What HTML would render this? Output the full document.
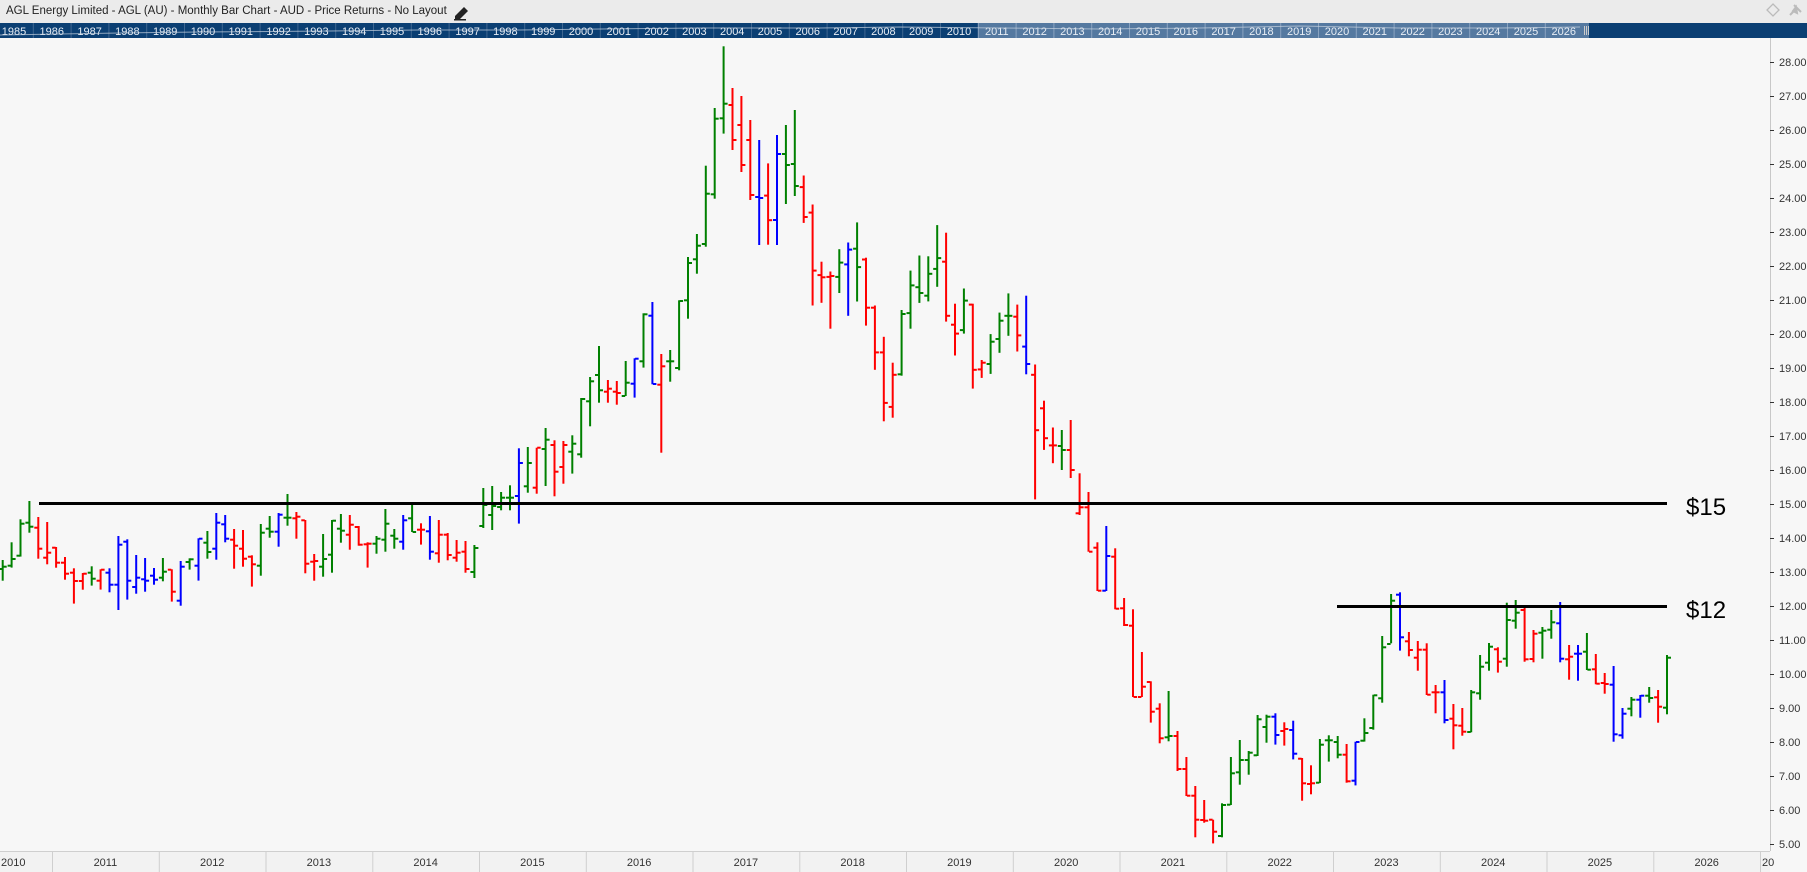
<!DOCTYPE html>
<html><head><meta charset="utf-8"><style>
*{margin:0;padding:0;box-sizing:border-box}
body{width:1807px;height:872px;overflow:hidden;background:#f7f7f7;font-family:"Liberation Sans",sans-serif;position:relative}
#title{position:absolute;left:0;top:0;width:1807px;height:23px;background:#ebebeb;color:#222;font-size:11.5px;line-height:23px;padding-left:6px}
svg{position:absolute;left:0;top:0}
</style></head><body>
<div id="title">AGL Energy Limited - AGL (AU) - Monthly Bar Chart - AUD - Price Returns - No Layout</div>
<svg id="s" width="1807" height="872" viewBox="0 0 1807 872"></svg>
<script>
var o=[];
function r(x,y,w,h,c){o.push('<rect x="'+x.toFixed(1)+'" y="'+y.toFixed(1)+'" width="'+w+'" height="'+h.toFixed(1)+'" fill="'+c+'"/>');}
function t(x,y,s,size,c,a){o.push('<text x="'+x+'" y="'+y+'" font-size="'+size+'" fill="'+c+'"'+(a?' text-anchor="'+a+'"':'')+' font-family="Liberation Sans, sans-serif">'+s+'</text>');}
o.push('<path d="M464 7 L468 11 L459 20 L455 20 L455 16 Z" fill="#222"/><rect x="454" y="19" width="12" height="1.5" fill="#222"/>');
o.push('<path d="M1773 4 L1779 10 L1773 16 L1767 10 Z" fill="none" stroke="#bbb" stroke-width="1.3"/>');
o.push('<path d="M1790 15 L1795 10 M1794 5 L1801 12 M1796 7 L1793 11 L1797 13 Z" stroke="#bbb" stroke-width="2" fill="#bbb"/>');
r(0,23,1807,15,'#0b3f73');
r(978,23,611,15,'#5579a0');
for(var k=0;k<42;k++){var nx=-5+37.8*k;r(nx,23,1,15,k>=26&&k<=41?'#8aa3c0':'#3f6791');t((nx+19).toFixed(1),35,1985+k,11,'#e8eef5','middle');}
o.push('<polyline points="0,35 60,34 120,33 200,32 330,31 420,30 520,30 600,29 700,28 820,28 900,27 1000,28 1100,29 1200,28 1300,26 1400,28 1500,28 1580,27" fill="none" stroke="#c8d3e0" stroke-width="1" opacity="0.7"/>');
r(1584,26,1,9,'#ccc');r(1586,26,1,9,'#ccc');r(1588,26,1,9,'#ccc');
r(1770,38,1,813,'#c8c8c8');
for(var p=5;p<=28;p++){var y=504+(15-p)*34;r(1770,y,4,1,'#333');t(1779,y+4,p.toFixed(2),11,'#333');}
r(0,851,1770,21,'#f2f2f2');r(0,851,1770,1,'#cfcfcf');
t(1,866,'2010',11,'#333');
for(var k=0;k<17;k++){var dx=52+106.75*k;r(dx,852,1,20,'#cfcfcf');if(dx+53<1770)t((dx+53.4).toFixed(1),866,2011+k,11,'#333','middle');else t((dx+2).toFixed(1),866,'20',11,'#333');}
var C={G:'#008000',R:'#ff0000',B:'#0000ff'};
function bar(i,hi,lo,op,cl,col){var x=2.7+8.9*(i-1);var c=C[col];r(x-1,hi,2,Math.max(lo-hi,2),c);r(x-4,op-1,3.5,2,c);r(x+0.5,cl-1,3.5,2,c);}
function set(list,fx,fy){list.forEach(function(b){bar(b[0],fy(b[1]),fy(b[2]),fy(b[3]),fy(b[4]),b[5]);});}
var id=function(v){return v;};
var z6=[[1,540,602,567,560,'G'],[2,487,563,557,537,'G'],[3,418,530,527,431,'G'],[4,363,458,428,440,'G'],[5,411,536,443,506,'R'],[6,426,553,533,518,'R'],[7,501,563,503,548,'R'],[8,531,599,548,581,'R'],[9,565,671,578,603,'R'],[10,579,629,603,581,'R'],[11,559,617,578,596,'G'],[12,568,629,602,569,'R'],[13,565,637,578,614,'B'],[14,468,690,614,494,'B'],[15,478,659,485,602,'B'],[16,525,641,621,593,'B'],[17,534,635,598,602,'B'],[18,564,614,587,599,'B'],[19,534,604,593,575,'G'],[20,568,665,569,635,'R'],[21,543,677,662,560,'B'],[22,535,569,546,538,'G'],[23,475,602,557,476,'B'],[24,453,536,488,516,'G'],[25,399,539,506,428,'B'],[26,405,487,433,476,'B'],[27,447,566,479,497,'R'],[28,450,560,506,536,'R'],[29,526,620,530,553,'R'],[30,432,587,557,458,'G'],[31,408,473,446,455,'G'],[32,399,500,455,404,'B'],[33,342,437,413,413,'G'],[34,396,476,415,410,'R'],[35,420,580,421,551,'R'],[36,522,602,545,543,'R'],[37,462,590,560,537,'G'],[38,420,578,524,422,'G'],[39,402,488,446,452,'G'],[40,405,509,464,434,'R'],[41,438,497,441,494,'R'],[42,487,563,493,491,'R'],[43,468,521,491,476,'G'],[44,387,515,479,431,'G'],[45,447,506,467,476,'G'],[46,405,509,485,421,'B'],[47,372,456,415,456,'G'],[48,430,494,449,449,'R'],[49,408,539,454,515,'B'],[50,420,548,520,464,'R'],[51,459,541,464,525,'R'],[52,480,545,533,518,'R'],[53,483,578,515,567,'R']];
set(z6,id,function(v){return 380+v/3;});
var act=[[54,545,578,572,548,'G'],[55,488,528,526,505,'G'],[56,486,530,515,506,'G'],[83,88,150,105,140,'R'],[84,96,172,125,165,'R'],[85,120,200,140,195,'R'],[86,140,245,197,198,'B'],[88,135,245,220,154,'B'],[89,125,204,154,165,'G'],[90,110,196,164,186,'G'],[120,430,470,446,450,'G'],[121,420,478,450,470,'R']];
set(act,id,id);
var z7=[[57,1365,1420,1410,1382,'G'],[58,1345,1420,1382,1382,'G'],[59,1234,1460,1377,1278,'B'],[60,1230,1367,1348,1278,'G'],[61,1232,1370,1352,1232,'R'],[62,1173,1347,1236,1208,'G'],[63,1210,1378,1224,1304,'R'],[64,1212,1340,1290,1224,'R'],[65,1195,1310,1244,1220,'G'],[66,1083,1262,1252,1086,'G'],[67,1020,1168,1093,1033,'G'],[68,927,1097,1014,1060,'G'],[69,1029,1097,1064,1055,'R'],[70,1032,1103,1064,1068,'R'],[71,972,1077,1077,1037,'G'],[72,964,1082,1040,965,'B'],[73,829,992,973,832,'G'],[74,795,1042,836,1041,'B'],[75,951,1247,1043,988,'R'],[76,939,1034,973,973,'G'],[77,790,1000,993,792,'G'],[78,660,845,790,678,'G'],[79,591,710,667,626,'G'],[80,386,629,621,470,'G'],[81,213,485,472,245,'G'],[82,28,290,244,200,'G']];
set(z7,id,function(v){return 37+v/3;});
var z8=[[87,30,212,102,157,'R'],[91,57,163,83,150,'R'],[92,122,348,140,270,'R'],[93,250,342,280,285,'R'],[94,272,400,284,282,'R'],[95,222,320,284,252,'G'],[96,207,371,256,223,'B'],[97,162,339,221,262,'G'],[98,241,393,245,353,'R'],[99,348,492,353,453,'R'],[100,418,607,453,566,'R'],[101,476,599,575,503,'R'],[102,358,505,502,367,'G'],[103,270,400,365,303,'G'],[104,236,342,307,320,'G'],[105,238,339,326,277,'G'],[106,168,306,266,242,'G'],[107,185,384,250,371,'R'],[108,344,460,391,411,'R'],[109,310,411,403,337,'G'],[110,344,534,346,492,'R'],[111,470,510,491,476,'R'],[112,412,501,479,429,'G'],[113,364,454,423,382,'G'],[114,321,416,371,371,'G'],[115,346,451,373,415,'R'],[116,326,502,440,479,'B'],[117,480,782,503,627,'R'],[118,561,671,578,645,'R'],[119,621,701,661,661,'R']];
set(z8,id,function(v){return 150+v/2.238;});
var z9=[[122,-20,105,100,82,'R'],[123,36,215,82,215,'R'],[124,187,333,203,332,'R'],[125,138,333,332,228,'B'],[126,205,388,230,386,'R'],[127,354,438,385,435,'R'],[128,388,651,437,651,'R'],[129,516,651,651,620,'R'],[130,604,728,606,695,'R'],[131,670,790,686,775,'R'],[132,633,784,772,768,'G'],[133,753,873,768,867,'R'],[134,831,948,867,947,'R'],[135,918,1072,947,1019,'R'],[136,960,1028,1020,1022,'R'],[137,1019,1090,1019,1055,'R'],[138,970,1072,1068,975,'G'],[139,831,975,974,880,'G'],[140,780,914,877,840,'G'],[141,813,884,840,818,'G'],[142,705,828,826,718,'G'],[143,704,788,741,710,'G'],[144,700,794,710,765,'B'],[145,727,797,753,747,'R'],[146,722,838,750,821,'B'],[147,834,962,836,910,'R'],[148,856,943,912,910,'R'],[149,777,909,908,794,'G'],[150,766,845,781,781,'G'],[151,768,835,786,824,'G'],[152,792,908,824,904,'R'],[153,785,916,902,786,'B'],[154,715,785,782,759,'G'],[155,644,749,744,646,'G'],[156,468,668,655,502,'G'],[157,342,490,492,362,'G'],[158,337,512,344,472,'B'],[159,456,529,484,510,'R'],[160,483,572,533,509,'R'],[161,490,645,509,644,'R'],[162,615,700,637,637,'R'],[163,600,730,637,720,'B'],[164,672,808,716,736,'R']];
set(z9,id,function(v){return 480+v/3;});
var z10=[[165,444,527,497,515,'R'],[166,390,517,516,397,'G'],[167,285,419,400,320,'G'],[168,249,332,308,260,'G'],[169,262,338,268,305,'R'],[170,128,320,296,180,'G'],[171,120,206,182,158,'G'],[172,135,305,150,298,'R'],[173,210,307,297,221,'R'],[174,201,296,218,212,'G'],[175,150,236,209,187,'G'],[176,126,307,190,296,'B'],[177,255,359,298,290,'R'],[178,255,362,281,281,'B'],[179,219,330,275,329,'G'],[180,282,373,328,371,'R'],[181,339,401,369,372,'R'],[182,318,545,374,523,'B'],[183,444,536,526,461,'B'],[184,411,469,446,419,'G'],[185,405,473,419,407,'B'],[186,381,428,407,414,'G'],[187,390,488,412,440,'R'],[188,285,463,443,293,'G']];
set(z10,id,function(v){return 560+v/3;});
r(39,502,1628,3,'#000');r(1337,605,330,3,'#000');
t(1686,515,'$15',24,'#000');t(1686,618,'$12',24,'#000');
document.getElementById('s').innerHTML=o.join('');
</script>
</body></html>
